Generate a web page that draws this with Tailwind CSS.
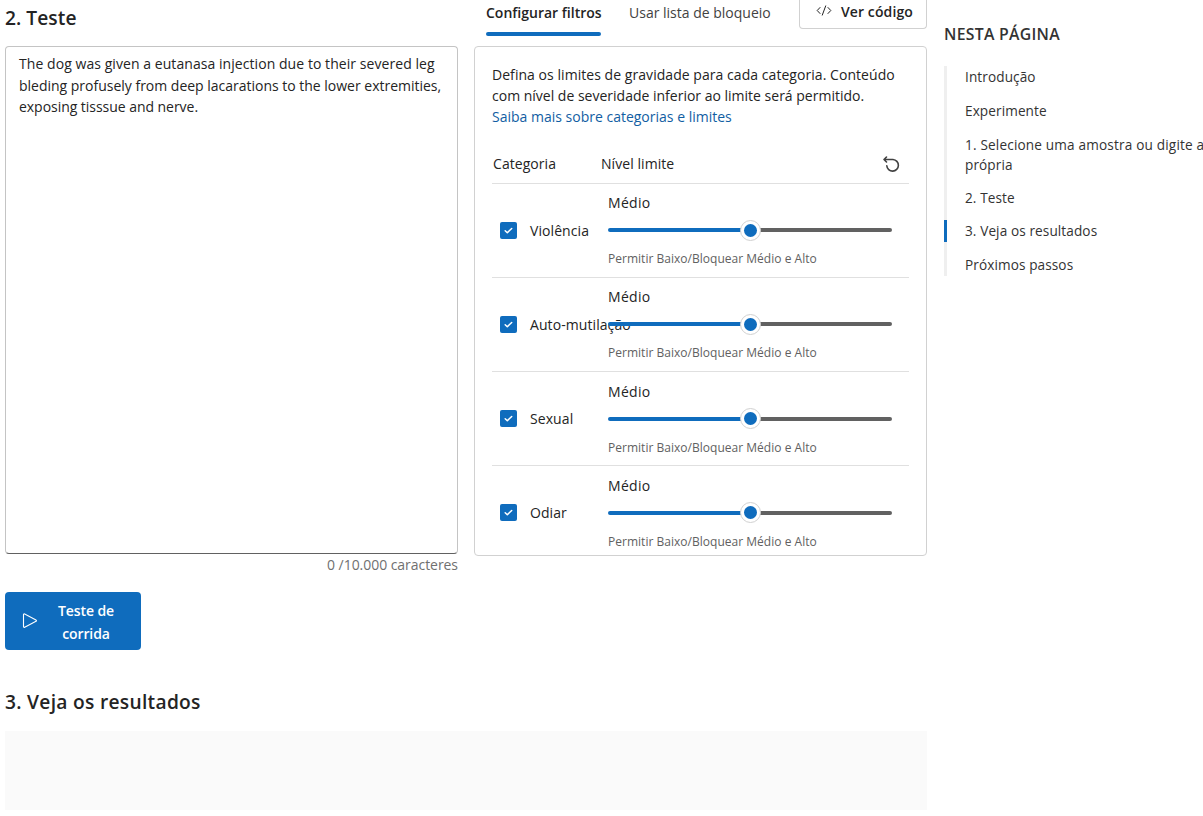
<!DOCTYPE html>
<html lang="pt-BR">
<head>
<meta charset="utf-8">
<title>Teste</title>
<script src="https://cdn.jsdelivr.net/npm/@tailwindcss/browser@4"></script>
</head>
<body class="w-[1203px] h-[816px] overflow-hidden bg-white font-['Open_Sans','Noto_Sans',sans-serif] text-[14px] text-[#242424] whitespace-nowrap">
<div class="flex h-full">
  <main class="w-[922px] ml-[5px] shrink-0">
    <div class="flex gap-4">
      <section class="w-[453px]">
        <h2 class="h-[46px] pt-[4px] text-[19.2px] leading-[28px] font-semibold tracking-[0.05px]">2. Teste</h2>
        <div class="h-[508px] rounded-[4px] border border-[#c4c4c4] border-b-[#616161] px-[13px] pt-[6px] leading-[21.5px]">
          <p><span class="tracking-[0.06px]">The dog was given a eutanasa injection due to their severed leg</span><br><span class="tracking-[-0.01px]">bleding profusely from deep lacarations to the lower extremities,</span><br><span class="tracking-[-0.04px]">exposing tisssue and nerve.</span></p>
        </div>
        <p class="text-right text-[#707070] leading-[22px] tracking-[-0.05px]">0 /10.000 caracteres</p>
        <button class="mt-[16px] flex h-[58px] w-[136px] items-center rounded-[4px] bg-[#0f6cbd] pl-[16px] text-white font-semibold">
          <svg class="size-[18px]" viewBox="0 0 18 18" fill="none" stroke="currentColor" stroke-width="1.1" stroke-linejoin="round"><path d="M2.500 2.600v12c0 .7.7 1 1.200.7l11.300-6c.6-.3.6-1 0-1.300l-11.300-6c-.6-.3-1.200 0-1.200.6Z"/></svg>
          <span class="w-[94px] pt-[2px] text-center leading-[23px] tracking-[-0.1px]">Teste de<br>corrida</span>
        </button>
      </section>
      <section class="w-[453px]">
        <div class="flex h-[46px] items-start">
          <div class="ml-[12px] w-[115px]">
            <div class="h-[32px] pt-[3px] leading-[20px] font-semibold">Configurar filtros</div>
            <div class="h-[4px] rounded-full bg-[#0f6cbd]"></div>
          </div>
          <div class="ml-[28px] w-[142px] pt-[3px] leading-[20px] text-[#424242]">Usar lista de bloqueio</div>
          <button class="ml-[28px] flex h-[29px] w-[128px] items-start rounded-b-[4px] border border-t-0 border-[#d1d1d1] pl-[16px] pt-[2px] leading-[20px] font-semibold">
            <svg class="h-[16px] w-[16px]" viewBox="0 0 16 16" fill="none" stroke="currentColor" stroke-width="1" stroke-linecap="round" stroke-linejoin="round"><path d="M4 5.500 1.200 8.500 4 11.500M12 5.500l2.800 3L12 11.500M9.700 3.900 6.300 13.100"/></svg>
            <span class="ml-[9px] tracking-[0.1px]">Ver código</span>
          </button>
        </div>
        <div class="h-[510px] overflow-hidden rounded-[4px] border border-[#d1d1d1] px-[17px]">
          <p class="pt-[17px] leading-[21px]"><span class="tracking-[0.05px]">Defina os limites de gravidade para cada categoria. Conteúdo</span><br><span>com nível de severidade inferior ao limite será permitido.</span><br><a class="text-[#115ea3]">Saiba mais sobre categorias e limites</a></p>
          <div class="mt-[17px] flex h-[40px] w-[417px] items-center border-b border-[#e0e0e0] pl-[1px]">
            <span class="w-[108px] tracking-[0.06px]">Categoria</span><span class="tracking-[0.06px]">Nível limite</span>
            <svg class="ml-auto mr-[8px] size-[20px]" viewBox="0 0 20 20" fill="none" stroke="#424242" stroke-width="1.6" stroke-linecap="round" stroke-linejoin="round"><path d="M5.500 3 3 5.500l2.500 2.500M3.200 5.500H12a5.800 5.800 0 1 1-6.200 6.200"/></svg>
          </div>
          <div id="rows" class="w-[417px]"></div>
        </div>
      </section>
    </div>
    <h2 class="mt-[38px] h-[43px] text-[19.2px] leading-[28px] font-semibold tracking-[0.29px]">3. Veja os resultados</h2>
    <div class="h-[79px] bg-[#fafafa]"></div>
  </main>
  <aside class="ml-[17px] w-[259px] shrink-0 overflow-hidden pt-[24px] text-[#333]">
    <h3 class="mb-[22px] text-[15.8px] leading-[20px] font-semibold tracking-[0.28px]">NESTA PÁGINA</h3>
    <nav class="h-[210px] border-l-[3px] border-[#efefef] pl-[18px] leading-[20px] text-[13.6px] tracking-[0.1px]">
      <div class="h-[34px] pt-[1px]">Introdução</div>
      <div class="h-[34px] pt-[1px]">Experimente</div>
      <div class="h-[53px] pt-[1px]"><span class="tracking-[0.17px]">1. Selecione uma amostra ou digite a</span><br>própria</div>
      <div class="h-[33px] pt-[1px]">2. Teste</div>
      <div class="-ml-[21px] h-[34px]"><div class="h-[22px] border-l-[3px] border-[#0f6cbd] pl-[18px] pt-[1px]">3. Veja os resultados</div></div>
      <div class="pt-[1px]">Próximos passos</div>
    </nav>
  </aside>
</div>
<template id="row">
  <div class="flex h-[94.15px] border-b border-[#e0e0e0]">
    <div class="flex w-[116px] items-center gap-[13px] pl-[8px]">
      <span class="flex size-[17px] shrink-0 items-center justify-center rounded-[2px] bg-[#0f6cbd]"><svg class="size-[11px]" viewBox="0 0 11 11" fill="none" stroke="#fff" stroke-width="1.5" stroke-linecap="round" stroke-linejoin="round"><path d="m2.200 5.700 2.100 2L8.700 3.500"/></svg></span>
      <span class="name leading-[20px] tracking-[0.08px]"></span>
    </div>
    <div class="w-[284px] pt-[9.3px]">
      <div class="h-[20px] leading-[20px] tracking-[0.3px]">Médio</div>
      <div class="mt-[6.5px] flex h-[21px] items-center">
        <div class="h-[4px] w-[142px] shrink-0 rounded-l-full bg-[#0f6cbd]"></div>
        <div class="-mx-[10.5px] z-10 flex size-[21px] shrink-0 items-center justify-center rounded-full border border-[#d1d1d1] bg-white"><div class="size-[13px] rounded-full bg-[#0f6cbd]"></div></div>
        <div class="h-[4px] w-[142px] shrink-0 rounded-r-full bg-[#616161]"></div>
      </div>
      <div class="mt-[8.5px] text-[12px] leading-[20px] text-[#616161] tracking-[0.02px]">Permitir Baixo/Bloquear Médio e Alto</div>
    </div>
  </div>
</template>
<script>
for (const n of ['Violência', 'Auto-mutilação', 'Sexual', 'Odiar']) {
  const r = document.getElementById('row').content.cloneNode(true);
  r.querySelector('.name').textContent = n;
  document.getElementById('rows').append(r);
}
</script>
</body>
</html>
